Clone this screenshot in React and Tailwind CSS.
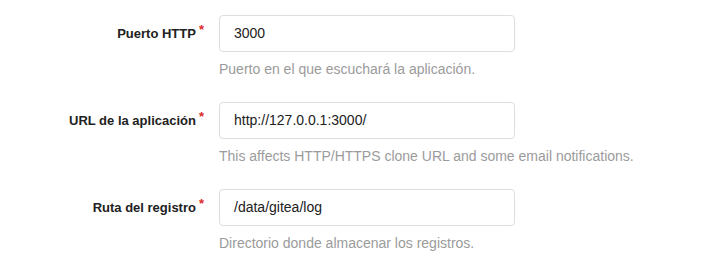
import React from "react";

const rows = [
  { label: "Puerto HTTP", value: "3000", help: "Puerto en el que escuchará la aplicación." },
  { label: "URL de la aplicación", value: "http://127.0.0.1:3000/", help: "This affects HTTP/HTTPS clone URL and some email notifications." },
  { label: "Ruta del registro", value: "/data/gitea/log", help: "Directorio donde almacenar los registros." },
];

export default function App() {
  return (
    <div className="w-[709px] h-[267px] bg-white pt-[15px] flex flex-col gap-[23px]" style={{ fontFamily: '"Liberation Sans", Arial, sans-serif' }}>
      {rows.map((r) => (
        <div key={r.label} className="flex flex-col">
          <div className="flex items-center">
            <label className="w-[204px] shrink-0 flex justify-end items-start text-[13px] font-bold text-[#212121] leading-none">
              <span>{r.label}</span>
              <span className="text-[#db2828] ml-[3px] -mt-[4px] text-[13px]">*</span>
            </label>
            <div className="ml-[15px] w-[296px] h-[37px] border border-[#dededf] rounded-[4px] flex items-center px-[14px] text-[14px] text-[#212121]">
              {r.value}
            </div>
          </div>
          <div className="ml-[219px] mt-[7px] text-[14px] leading-[20px] text-[#9b9b9b]">{r.help}</div>
        </div>
      ))}
    </div>
  );
}
